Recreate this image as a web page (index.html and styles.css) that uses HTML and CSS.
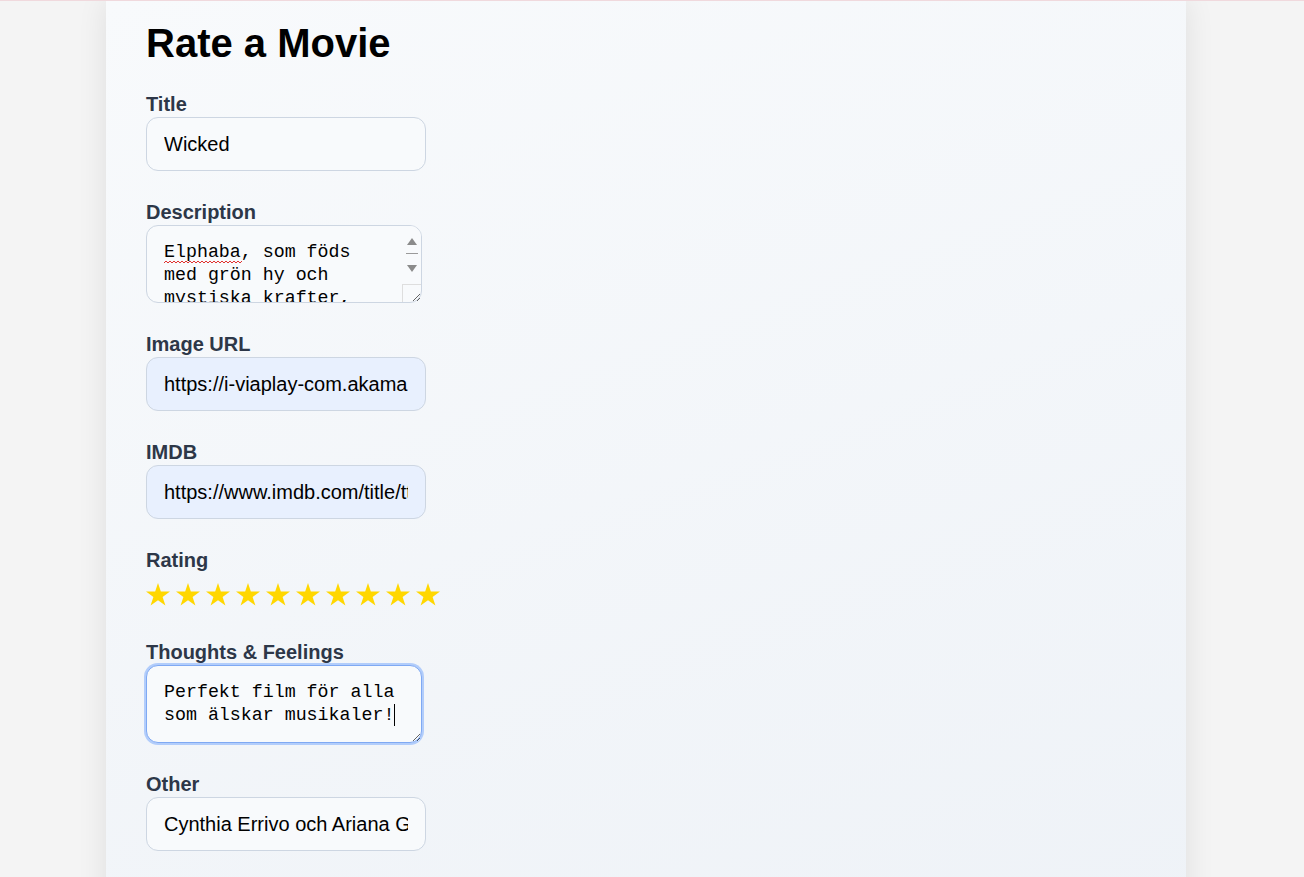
FILE: index.html
```html
<!DOCTYPE html>
<html lang="sv">
<head>
<meta charset="utf-8">
<title>Rate a Movie</title>
<link rel="stylesheet" href="styles.css">
</head>
<body>
<main class="card">
  <h1 class="page-title">Rate a Movie</h1>
  <form class="movie-form">
    <div class="field">
      <label class="label" for="title">Title</label>
      <input class="input" id="title" type="text" value="Wicked">
    </div>
    <div class="field">
      <label class="label" for="desc">Description</label>
      <div class="textarea-wrap">
        <textarea class="textarea textarea-scroll" id="desc" spellcheck="false">Elphaba, som föds med grön hy och mystiska krafter, möter den populära Glinda vid Shiz universitet i Oz. Deras osannolika vänskap sätts på prov.</textarea>
        <svg class="squiggle" viewBox="0 0 78 4" preserveAspectRatio="none"><polyline points="0,3 2,1 4,3 6,1 8,3 10,1 12,3 14,1 16,3 18,1 20,3 22,1 24,3 26,1 28,3 30,1 32,3 34,1 36,3 38,1 40,3 42,1 44,3 46,1 48,3 50,1 52,3 54,1 56,3 58,1 60,3 62,1 64,3 66,1 68,3 70,1 72,3 74,1 76,3 78,1"/></svg>
        <div class="fake-scrollbar">
          <svg class="sb-arrow" viewBox="0 0 10 7"><path d="M5 0L10 7H0z"/></svg>
          <span class="sb-thumb"></span>
          <svg class="sb-arrow" viewBox="0 0 10 7"><path d="M0 0H10L5 7z"/></svg>
        </div>
        <div class="fake-corner"></div>
      </div>
    </div>
    <div class="field">
      <label class="label" for="img">Image URL</label>
      <input class="input input-autofill" id="img" type="text" value="https://i-viaplay-com.akamaized.net/viaplay-prod/wicked.jpg">
    </div>
    <div class="field">
      <label class="label" for="imdb">IMDB</label>
      <input class="input input-autofill" id="imdb" type="text" value="https://www.imdb.com/title/tt1262426/">
    </div>
    <div class="field">
      <span class="label">Rating</span>
      <div class="stars">
        <svg class="star" viewBox="0 0 24 23"><path d="M12 0l2.83 8.6H24l-7.4 5.35 2.83 8.65L12 17.25 4.57 22.6l2.83-8.65L0 8.6h9.17z"/></svg>
        <svg class="star" viewBox="0 0 24 23"><path d="M12 0l2.83 8.6H24l-7.4 5.35 2.83 8.65L12 17.25 4.57 22.6l2.83-8.65L0 8.6h9.17z"/></svg>
        <svg class="star" viewBox="0 0 24 23"><path d="M12 0l2.83 8.6H24l-7.4 5.35 2.83 8.65L12 17.25 4.57 22.6l2.83-8.65L0 8.6h9.17z"/></svg>
        <svg class="star" viewBox="0 0 24 23"><path d="M12 0l2.83 8.6H24l-7.4 5.35 2.83 8.65L12 17.25 4.57 22.6l2.83-8.65L0 8.6h9.17z"/></svg>
        <svg class="star" viewBox="0 0 24 23"><path d="M12 0l2.83 8.6H24l-7.4 5.35 2.83 8.65L12 17.25 4.57 22.6l2.83-8.65L0 8.6h9.17z"/></svg>
        <svg class="star" viewBox="0 0 24 23"><path d="M12 0l2.83 8.6H24l-7.4 5.35 2.83 8.65L12 17.25 4.57 22.6l2.83-8.65L0 8.6h9.17z"/></svg>
        <svg class="star" viewBox="0 0 24 23"><path d="M12 0l2.83 8.6H24l-7.4 5.35 2.83 8.65L12 17.25 4.57 22.6l2.83-8.65L0 8.6h9.17z"/></svg>
        <svg class="star" viewBox="0 0 24 23"><path d="M12 0l2.83 8.6H24l-7.4 5.35 2.83 8.65L12 17.25 4.57 22.6l2.83-8.65L0 8.6h9.17z"/></svg>
        <svg class="star" viewBox="0 0 24 23"><path d="M12 0l2.83 8.6H24l-7.4 5.35 2.83 8.65L12 17.25 4.57 22.6l2.83-8.65L0 8.6h9.17z"/></svg>
        <svg class="star" viewBox="0 0 24 23"><path d="M12 0l2.83 8.6H24l-7.4 5.35 2.83 8.65L12 17.25 4.57 22.6l2.83-8.65L0 8.6h9.17z"/></svg>
      </div>
    </div>
    <div class="field">
      <label class="label" for="thoughts">Thoughts &amp; Feelings</label>
      <div class="textarea-wrap">
        <textarea class="textarea textarea-focused" id="thoughts" spellcheck="false">Perfekt film för alla som älskar musikaler!</textarea>
        <span class="fake-caret"></span>
      </div>
    </div>
    <div class="field">
      <label class="label" for="other">Other</label>
      <input class="input" id="other" type="text" value="Cynthia Errivo och Ariana Grande">
    </div>
  </form>
</main>
</body>
</html>
```

FILE: styles.css
```css
html, body {
  margin: 0;
  padding: 0;
}

body {
  background: #f4f4f4;
  border-top: 1px solid #f0d9dd;
  padding-right: 12px;
  font-family: "Liberation Sans", Arial, sans-serif;
  overflow: hidden;
}

.card {
  width: 1080px;
  box-sizing: border-box;
  margin: 0 auto;
  padding: 19px 40px 80px;
  min-height: 960px;
  background: linear-gradient(160deg, #f8fafc 0%, #eef2f7 100%);
  box-shadow: 0 0 28px rgba(0, 0, 0, 0.09);
}

.page-title {
  margin: 0 0 27px;
  font-size: 40px;
  line-height: 46px;
  font-weight: 700;
  color: #000;
}

.movie-form {
  display: flex;
  flex-direction: column;
  gap: 30px;
}

.field {
  display: flex;
  flex-direction: column;
  align-items: flex-start;
}

.label {
  display: block;
  font-size: 20px;
  line-height: 23px;
  font-weight: 700;
  color: #2d3748;
  margin-bottom: 1px;
}

.input {
  box-sizing: border-box;
  width: 280px;
  height: 54px;
  padding: 0 17px;
  border: 1px solid #cdd6e2;
  border-radius: 12px;
  background: #f8fafc;
  font-family: "Liberation Sans", Arial, sans-serif;
  font-size: 20px;
  color: #000;
  outline: none;
}

.input-autofill {
  background: #e8f0fe;
}

.textarea {
  display: block;
  box-sizing: border-box;
  width: 276px;
  height: 78px;
  padding: 15px 17px;
  border: 1px solid #cdd6e2;
  border-radius: 12px;
  background: #f8fafc;
  font-family: "Liberation Mono", "DejaVu Sans Mono", monospace;
  font-size: 18.3px;
  line-height: 23px;
  color: #000;
  outline: none;
  resize: both;
}

.textarea-wrap {
  position: relative;
}

.textarea-scroll {
  overflow: hidden;
  padding-right: 36px;
}

.squiggle {
  position: absolute;
  left: 18px;
  top: 35px;
  width: 78px;
  height: 4px;
  fill: none;
  stroke: #e0312f;
  stroke-width: 1;
}

.fake-scrollbar {
  position: absolute;
  top: 1px;
  right: 1px;
  width: 19px;
  height: 58px;
  background: #f8fafc;
  display: flex;
  flex-direction: column;
  align-items: center;
  padding-top: 12px;
  box-sizing: border-box;
  border-top-right-radius: 11px;
}

.sb-arrow {
  width: 10px;
  height: 7px;
  fill: #8b8b8b;
  display: block;
}

.sb-thumb {
  display: block;
  width: 12px;
  height: 1px;
  background: #9a9a9a;
  margin: 8px 0 11px;
}

.fake-corner {
  position: absolute;
  right: 1px;
  bottom: 1px;
  width: 18px;
  height: 17px;
  border-left: 1px solid #dedede;
  border-top: 1px solid #dedede;
  border-bottom-right-radius: 11px;
  pointer-events: none;
}

.textarea-focused {
  border-color: #7fa9f3;
  box-shadow: 0 0 0 2px #b2cdfb;
}

.fake-caret {
  position: absolute;
  left: 248px;
  top: 39px;
  width: 1px;
  height: 22px;
  background: #000;
  pointer-events: none;
}

.stars {
  display: flex;
  gap: 6px;
  padding: 10px 0 5px;
}

.star {
  width: 24px;
  height: 23px;
  fill: #ffd700;
  display: block;
}
```
